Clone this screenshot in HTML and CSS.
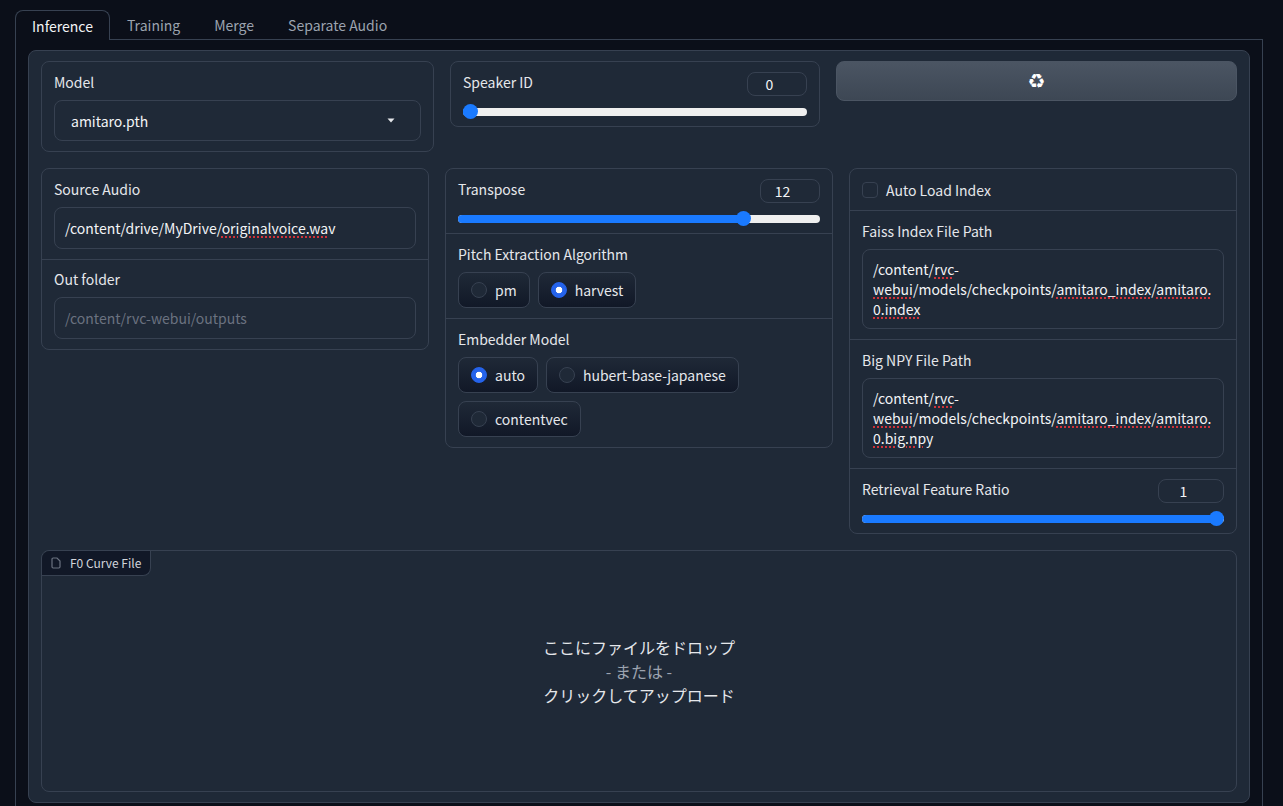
FILE: index.html
```html
<!doctype html>
<html>
<head>
<meta charset="utf-8">
<title>RVC WebUI</title>
<link rel="stylesheet" href="styles.css">
</head>

<body>
<div class="tab-nav">
	<button class="tab selected">Inference</button>
	<button class="tab">Training</button>
	<button class="tab">Merge</button>
	<button class="tab">Separate Audio</button>
	<div class="tab-line"></div>
</div>
<div class="tab-body">
	<div class="panel">
		<div class="row-top">
			<div class="block">
				<div class="section">
					<div class="label">Model</div>
					<div class="dropdown">
						<span>amitaro.pth</span>
						<svg class="caret" width="8" height="5" viewBox="0 0 8 5"><path d="M0.5 0.5h7L4 4.5z" fill="#e5e7eb"/></svg>
					</div>
				</div>
			</div>
			<div class="block">
				<div class="section slider-section">
					<div class="slider-head">
						<div class="label">Speaker ID</div>
						<div class="number">0</div>
					</div>
					<div class="slider" style="--value: 0"><div class="fill"></div><div class="thumb"></div></div>
				</div>
			</div>
			<button class="btn-refresh">♻</button>
		</div>

		<div class="row-main">
			<div class="block">
				<div class="section">
					<div class="label">Source Audio</div>
					<div class="input"><span>/content/drive/MyDrive/</span><span class="typo">originalvoice.wa</span>v</div>
				</div>
				<div class="section section-tight">
					<div class="label">Out folder</div>
					<div class="input placeholder">/content/rvc-webui/outputs</div>
				</div>
			</div>

			<div class="block">
				<div class="section slider-section">
					<div class="slider-head">
						<div class="label">Transpose</div>
						<div class="number">12</div>
					</div>
					<div class="slider" style="--value: 0.8"><div class="fill"></div><div class="thumb"></div></div>
				</div>
				<div class="section">
					<div class="label">Pitch Extraction Algorithm</div>
					<div class="radios">
						<label class="radio"><i class="dot"></i>pm</label>
						<label class="radio"><i class="dot on"></i>harvest</label>
					</div>
				</div>
				<div class="section">
					<div class="label">Embedder Model</div>
					<div class="radios">
						<label class="radio"><i class="dot on"></i>auto</label>
						<label class="radio"><i class="dot"></i>hubert-base-japanese</label>
						<label class="radio"><i class="dot"></i>contentvec</label>
					</div>
				</div>
			</div>

			<div class="block">
				<div class="section check-section">
					<i class="checkbox"></i>
					<span class="check-text">Auto Load Index</span>
				</div>
				<div class="section">
					<div class="label">Faiss Index File Path</div>
					<div class="textarea">/content/<span class="typo">rvc</span>- <span class="typo">webui</span>/models/checkpoints/<span class="typo">amitaro_index</span>/<span class="typo">amitaro.0.index</span></div>
				</div>
				<div class="section">
					<div class="label">Big NPY File Path</div>
					<div class="textarea">/content/<span class="typo">rvc</span>- <span class="typo">webui</span>/models/checkpoints/<span class="typo">amitaro_index</span>/<span class="typo">amitaro.0.big.npy</span></div>
				</div>
				<div class="section slider-section">
					<div class="slider-head">
						<div class="label">Retrieval Feature Ratio</div>
						<div class="number wide">1</div>
					</div>
					<div class="slider" style="--value: 1"><div class="fill"></div><div class="thumb"></div></div>
				</div>
			</div>
		</div>

		<div class="upload">
			<div class="upload-tag">
				<svg width="10" height="12" viewBox="0 0 10 12" fill="none" stroke="#6b7280" stroke-width="1.2"><path d="M1 2.2a1.2 1.2 0 0 1 1.2-1.2H6l3 3v5.8A1.2 1.2 0 0 1 7.8 11H2.2A1.2 1.2 0 0 1 1 9.8z"/></svg>
				<span>F0 Curve File</span>
			</div>
			<div class="drop-text">
				<div>ここにファイルをドロップ</div>
				<div class="drop-or">- または -</div>
				<div>クリックしてアップロード</div>
			</div>
		</div>
	</div>
</div>
</body>
</html>
```

FILE: styles.css
```css
html, body { height: 806px; overflow: hidden; }
body { margin: 0; padding: 10px 20px 0 15px; box-sizing: border-box; background-color: #0b0f19; color: #e5e7eb; font: 14px/20px "Noto Sans CJK JP", "Noto Sans", sans-serif; }

.tab-nav { display: flex; height: 30px; }
.tab { padding: 0 17px; border: 1px solid transparent; border-bottom: 0; background: none; color: #9ca3af; font: inherit; }
.tab:not(.selected) { border-bottom: 1px solid #374151; margin: 0; padding: 0 17px; }
.tab + .tab { border-left: 0; border-right: 0; }
.tab.selected { padding: 0 16px; border-color: #374151; border-radius: 8px 8px 0 0; color: #f3f4f6; }
.tab-line { flex: 1; border-bottom: 1px solid #374151; }

.tab-body { height: 780px; padding: 10px 12px; border: 1px solid #374151; border-top: 0; }
.panel { padding: 10px 12px; border: 1px solid #374151; border-radius: 8px; background-color: #1f2937; }

.row-top { display: grid; grid-template-columns: 393px 370px 1fr; gap: 16px; align-items: start; }
.row-main { display: grid; grid-template-columns: repeat(3, 1fr); gap: 16px; align-items: start; margin-top: 16px; }

.block { border: 1px solid #374151; border-radius: 8px; background-color: #1f2937; }
.section { padding: 10px 12px; }
.section + .section { border-top: 1px solid #374151; }
.section-tight { padding-top: 9px; }

.label { margin-bottom: 8px; color: #e5e7eb; }
.input, .dropdown, .textarea { box-sizing: border-box; border: 1px solid #374151; border-radius: 8px; color: #f3f4f6; }
.input { height: 42px; padding: 10px; }
.placeholder { color: #6b7280; }
.dropdown { display: flex; align-items: center; justify-content: space-between; height: 41px; padding: 0 25px 0 16px; }
.textarea { padding: 9px 10px; overflow-wrap: anywhere; }
.typo { text-decoration: underline dotted #d0333a 2px; text-underline-offset: 2px; }

.btn-refresh { height: 40px; border: 1px solid #4b5563; border-radius: 8px; background: linear-gradient(to bottom, #4b5563, #3d4754); color: #fff; font: 20px/1 "DejaVu Sans", sans-serif; }

.slider-head { display: flex; justify-content: space-between; align-items: flex-start; }
.number { box-sizing: border-box; width: 60px; height: 24px; padding-right: 15px; border: 1px solid #374151; border-radius: 8px; color: #f3f4f6; line-height: 22px; text-align: center; }
.number.wide { width: 66px; }
.slider { position: relative; height: 8px; margin-top: 8px; border-radius: 4px; background-color: #efefef; }
.fill { height: 100%; width: calc((100% - 15px) * var(--value) + 7px); border-radius: 4px; background-color: #1a7aff; }
.thumb { position: absolute; top: -4px; left: calc((100% - 15px) * var(--value)); width: 15px; height: 15px; border-radius: 50%; background-color: #1a7aff; }

.radios { display: flex; flex-wrap: wrap; gap: 8px; }
.radio { display: flex; align-items: center; gap: 8px; padding: 7px 12px; border: 1px solid #374151; border-radius: 8px; background: linear-gradient(to bottom, #1f2937, #111827); color: #e5e7eb; }
.dot { box-sizing: border-box; width: 16px; height: 16px; border: 1px solid #374151; border-radius: 50%; background-color: #1f2937; }
.dot.on { border-color: #2563eb; background: radial-gradient(circle, #fff 0 3px, #2563eb 3.6px); }

.check-section { display: flex; align-items: center; gap: 8px; height: 21px; }
.checkbox { box-sizing: border-box; width: 16px; height: 16px; border: 1px solid #374151; border-radius: 4px; background-color: #1f2937; }

.upload { position: relative; display: flex; align-items: center; justify-content: center; box-sizing: border-box; height: 242px; margin-top: 16px; border: 1px solid #374151; border-radius: 8px; }
.upload-tag { position: absolute; top: 0; left: 0; display: flex; align-items: center; gap: 9px; height: 24px; padding: 0 9px; border-right: 1px solid #374151; border-bottom: 1px solid #374151; border-radius: 8px 0 8px 0; background-color: #111827; color: #d1d5db; font-size: 12px; }
.drop-text { color: #e5e7eb; font-size: 16px; line-height: 24px; text-align: center; }
.drop-or { color: #9ca3af; }
```
